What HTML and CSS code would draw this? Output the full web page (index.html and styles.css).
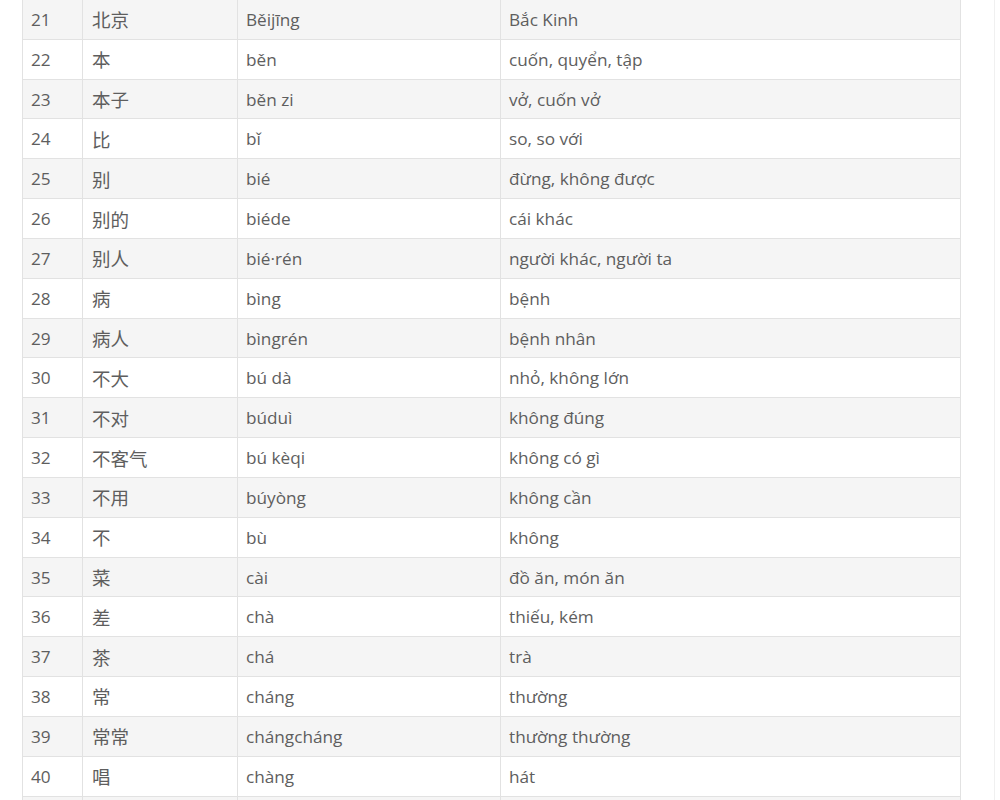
FILE: index.html
```html
<!DOCTYPE html>
<html lang="vi">
<head>
<meta charset="utf-8">
<link rel="stylesheet" href="styles.css">
</head>
<body>
<div class="page">
<table class="vocab">
<colgroup><col class="c1"><col class="c2"><col class="c3"><col class="c4"></colgroup>
<tbody>
<tr><td>21</td><td class="hz">北京</td><td>Běijīng</td><td>Bắc Kinh</td></tr>
<tr><td>22</td><td class="hz">本</td><td>běn</td><td>cuốn, quyển, tập</td></tr>
<tr><td>23</td><td class="hz">本子</td><td>běn zi</td><td>vở, cuốn vở</td></tr>
<tr><td>24</td><td class="hz">比</td><td>bǐ</td><td>so, so với</td></tr>
<tr><td>25</td><td class="hz">别</td><td>bié</td><td>đừng, không được</td></tr>
<tr><td>26</td><td class="hz">别的</td><td>biéde</td><td>cái khác</td></tr>
<tr><td>27</td><td class="hz">别人</td><td>bié·rén</td><td>người khác, người ta</td></tr>
<tr><td>28</td><td class="hz">病</td><td>bìng</td><td>bệnh</td></tr>
<tr><td>29</td><td class="hz">病人</td><td>bìngrén</td><td>bệnh nhân</td></tr>
<tr><td>30</td><td class="hz">不大</td><td>bú dà</td><td>nhỏ, không lớn</td></tr>
<tr><td>31</td><td class="hz">不对</td><td>búduì</td><td>không đúng</td></tr>
<tr><td>32</td><td class="hz">不客气</td><td>bú kèqi</td><td>không có gì</td></tr>
<tr><td>33</td><td class="hz">不用</td><td>búyòng</td><td>không cần</td></tr>
<tr><td>34</td><td class="hz">不</td><td>bù</td><td>không</td></tr>
<tr><td>35</td><td class="hz">菜</td><td>cài</td><td>đồ ăn, món ăn</td></tr>
<tr><td>36</td><td class="hz">差</td><td>chà</td><td>thiếu, kém</td></tr>
<tr><td>37</td><td class="hz">茶</td><td>chá</td><td>trà</td></tr>
<tr><td>38</td><td class="hz">常</td><td>cháng</td><td>thường</td></tr>
<tr><td>39</td><td class="hz">常常</td><td>chángcháng</td><td>thường thường</td></tr>
<tr><td>40</td><td class="hz">唱</td><td>chàng</td><td>hát</td></tr>
<tr><td></td><td></td><td></td><td></td></tr>
</tbody>
</table>
</div>
</body>
</html>
```
FILE: styles.css
```css
html, body {
  margin: 0;
  padding: 0;
  background: #ffffff;
  overflow: hidden;
}
.page {
  width: 995px;
  height: 800px;
  border-right: 1px solid #f0f0f0;
  box-sizing: border-box;
  padding-left: 22px;
  overflow: hidden;
}
.vocab {
  width: 938px;
  margin-top: -1px;
  border-collapse: collapse;
  table-layout: fixed;
  font-family: "Open Sans", "Noto Sans", "Noto Sans CJK SC", sans-serif;
  font-size: 17.2px;
  color: #5e5e5e;
}
.c1 { width: 60px; }
.c2 { width: 155px; }
.c3 { width: 263px; }
.c4 { width: 460px; }
.vocab td {
  border: 1px solid #e2e2e2;
  height: 39.84px;
  padding: 0 8px;
  box-sizing: border-box;
  white-space: nowrap;
  vertical-align: middle;
}
.vocab td.hz {
  font-family: "Noto Sans CJK SC", sans-serif;
  font-size: 18.5px;
  padding-left: 9px;
}
.vocab tr:nth-child(odd) td {
  background: #f5f5f5;
}
.vocab tr:nth-child(even) td {
  background: #ffffff;
}
```
